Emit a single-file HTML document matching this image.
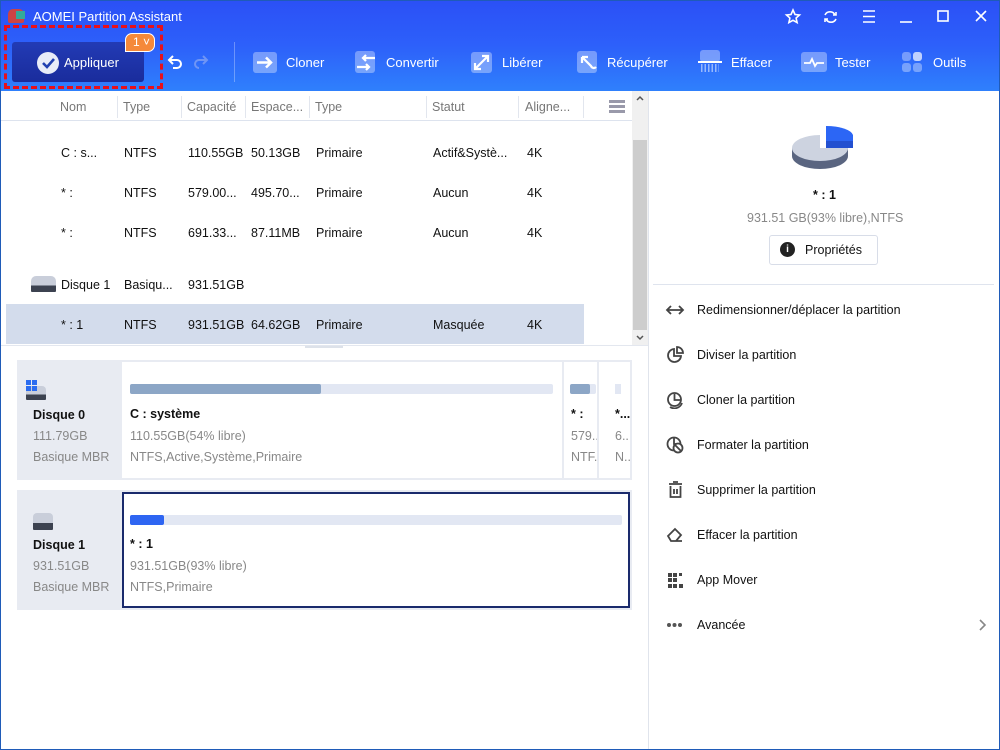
<!DOCTYPE html>
<html><head><meta charset="utf-8"><style>
*{margin:0;padding:0;box-sizing:border-box}
body{width:1000px;height:750px;overflow:hidden;font-family:"Liberation Sans","DejaVu Sans",sans-serif;font-size:12.5px;color:#111;background:#fff;position:relative}
.a{position:absolute;white-space:nowrap}
#hdr{position:absolute;left:0;top:0;width:1000px;height:91px;background:linear-gradient(180deg,#2b50f6 0%,#2d60fa 50%,#2f80fc 100%)}
.tb{color:#fff;font-size:13px}
.ic{position:absolute;border-radius:3px;background:rgba(255,255,255,.35)}
.hd{color:#777;font-size:12.5px}
.sep{position:absolute;top:96px;width:1px;height:22px;background:#e2e6ee}
.g{color:#888}
.menu{position:absolute;left:697px;font-size:12.5px;color:#111}
</style></head><body>
<div id="hdr"></div>
<div class="a" style="left:0;top:0;width:1000px;height:750px;border:1px solid #1f5bb8;z-index:9"></div>
<div class="a" style="left:8px;top:9px;width:16px;height:14px;background:#c44;border-radius:5px 5px 2px 2px"></div>
<div class="a" style="left:16px;top:11px;width:9px;height:8px;background:#3a9"></div>
<div class="a tb" style="left:33px;top:9px;font-size:13px">AOMEI Partition Assistant</div>
<svg class="a" style="left:780px;top:6px" width="210" height="22" fill="none" stroke="#fff" stroke-width="1.6">
<path d="M13 4l2 4.5 4.5.5-3.4 3 1 4.6L13 14.3 8.9 16.6l1-4.6-3.4-3 4.5-.5z"/>
<path d="M45 9a5.5 5.5 0 0 1 10 0M56 13a5.5 5.5 0 0 1-10 0"/><path d="M53 9h3V6M48 13h-3v3"/>
<path d="M83 5h12M83 10.5h12M83 16h12"/>
<path d="M120 16h12"/><rect x="158" y="5" width="10" height="10"/>
<path d="M196 5l10 10M206 5l-10 10"/></svg>
<div class="a" style="left:12px;top:42px;width:132px;height:40px;background:linear-gradient(#223bb5,#1a2c9c);border-radius:3px"></div>
<div class="a" style="left:37px;top:52px;width:22px;height:22px;border-radius:50%;background:#e8ecf8"></div>
<svg class="a" style="left:37px;top:52px" width="22" height="22"><path d="M6 11l4 4 7-8" stroke="#2040b0" stroke-width="2.6" fill="none"/></svg>
<div class="a tb" style="left:64px;top:55px;font-size:13px">Appliquer</div>
<div class="a" style="left:125px;top:33px;width:30px;height:19px;background:#f5893a;border:1.5px solid #fff;border-radius:7px 7px 7px 0;color:#fff;font-size:12px;padding-left:7px;line-height:16px">1 ˅</div>
<div class="a" style="left:4px;top:25px;width:159px;height:64px;border:3px dashed #e8101a"></div>
<svg class="a" style="left:166px;top:53px" width="45" height="16" fill="none" stroke-width="2"><path d="M4 7h7a4 4 0 0 1 0 8H7M7 3L3 7l4 4" stroke="#fff"/><path d="M40 7h-7a4 4 0 0 0 0 8M37 3l4 4-4 4" stroke="#6f95f5"/></svg>
<div class="a" style="left:234px;top:42px;width:1px;height:40px;background:rgba(255,255,255,.3)"></div>
<!-- toolbar icons -->
<div class="ic" style="left:253px;top:52px;width:24px;height:21px"></div>
<svg class="a" style="left:253px;top:52px" width="24" height="21" fill="none" stroke="#fff" stroke-width="2.5"><path d="M4 10.5h13M13 5.5l5 5-5 5"/></svg>
<div class="a tb" style="left:286px;top:55px">Cloner</div>
<div class="ic" style="left:355px;top:51px;width:20px;height:22px"></div>
<svg class="a" style="left:355px;top:51px" width="22" height="22" fill="none" stroke="#fff" stroke-width="2.2"><path d="M20 7H8M11 4L8 7l3 3M2 16h12M11 13l3 3-3 3"/></svg>
<div class="a tb" style="left:386px;top:55px">Convertir</div>
<div class="ic" style="left:471px;top:52px;width:21px;height:21px"></div>
<svg class="a" style="left:471px;top:52px" width="21" height="21" fill="none" stroke="#fff" stroke-width="2.2"><path d="M4 17L17 4M11 4h6v6M10 17H4v-6"/></svg>
<div class="a tb" style="left:502px;top:55px">Libérer</div>
<div class="ic" style="left:577px;top:51px;width:20px;height:22px"></div>
<svg class="a" style="left:577px;top:51px" width="22" height="24" fill="none" stroke="#fff" stroke-width="2.2"><path d="M5 6l9 9a3 3 0 0 0 5 1M5 6v6M5 6h6"/></svg>
<div class="a tb" style="left:607px;top:55px">Récupérer</div>
<div class="ic" style="left:700px;top:50px;width:20px;height:12px"></div>
<div class="a" style="left:698px;top:61px;width:24px;height:2px;background:#fff"></div>
<div class="a" style="left:701px;top:64px;width:18px;height:8px;background:repeating-linear-gradient(90deg,rgba(255,255,255,.5) 0 1.5px,transparent 1.5px 3.5px)"></div>
<div class="a tb" style="left:731px;top:55px">Effacer</div>
<div class="ic" style="left:801px;top:52px;width:26px;height:20px"></div>
<svg class="a" style="left:801px;top:52px" width="26" height="20" fill="none" stroke="#fff" stroke-width="1.8"><path d="M3 11h6l2-4 3 7 2-3h7"/></svg>
<div class="a tb" style="left:835px;top:55px">Tester</div>
<div class="ic" style="left:902px;top:52px;width:9px;height:9px"></div><div class="ic" style="left:913px;top:52px;width:9px;height:9px;background:rgba(255,255,255,.7)"></div><div class="ic" style="left:902px;top:63px;width:9px;height:9px"></div><div class="ic" style="left:913px;top:63px;width:9px;height:9px"></div>
<div class="a tb" style="left:933px;top:55px">Outils</div>
<!-- table header -->
<div class="a hd" style="left:60px;top:100px">Nom</div>
<div class="sep" style="left:117px"></div><div class="a hd" style="left:123px;top:100px">Type</div>
<div class="sep" style="left:181px"></div><div class="a hd" style="left:187px;top:100px">Capacité</div>
<div class="sep" style="left:245px"></div><div class="a hd" style="left:251px;top:100px">Espace...</div>
<div class="sep" style="left:309px"></div><div class="a hd" style="left:315px;top:100px">Type</div>
<div class="sep" style="left:426px"></div><div class="a hd" style="left:432px;top:100px">Statut</div>
<div class="sep" style="left:518px"></div><div class="a hd" style="left:525px;top:100px">Aligne...</div>
<div class="sep" style="left:583px"></div>
<div class="a" style="left:609px;top:100px;width:16px;height:3px;background:#99a"></div><div class="a" style="left:609px;top:105px;width:16px;height:3px;background:#99a"></div><div class="a" style="left:609px;top:110px;width:16px;height:3px;background:#99a"></div>
<div class="a" style="left:0;top:120px;width:632px;height:1px;background:#dde3ee"></div>
<div class="a" style="left:632px;top:91px;width:16px;height:254px;background:#f0f0f0"></div>
<div class="a" style="left:633px;top:140px;width:14px;height:190px;background:#cdcdcd"></div>
<svg class="a" style="left:632px;top:91px" width="16" height="254" fill="none" stroke="#555" stroke-width="1.5"><path d="M5 9l3-3 3 3M5 245l3 3 3-3"/></svg>
<!-- rows -->
<div class="a" style="left:6px;top:304px;width:578px;height:40px;background:#d3dcec"></div>
<div class="a" style="left:61px;top:146px">C : s...</div><div class="a" style="left:124px;top:146px">NTFS</div><div class="a" style="left:188px;top:146px">110.55GB</div><div class="a" style="left:251px;top:146px">50.13GB</div><div class="a" style="left:316px;top:146px">Primaire</div><div class="a" style="left:433px;top:146px">Actif&amp;Systè...</div><div class="a" style="left:527px;top:146px">4K</div>
<div class="a" style="left:61px;top:186px">* :</div><div class="a" style="left:124px;top:186px">NTFS</div><div class="a" style="left:188px;top:186px">579.00...</div><div class="a" style="left:251px;top:186px">495.70...</div><div class="a" style="left:316px;top:186px">Primaire</div><div class="a" style="left:433px;top:186px">Aucun</div><div class="a" style="left:527px;top:186px">4K</div>
<div class="a" style="left:61px;top:226px">* :</div><div class="a" style="left:124px;top:226px">NTFS</div><div class="a" style="left:188px;top:226px">691.33...</div><div class="a" style="left:251px;top:226px">87.11MB</div><div class="a" style="left:316px;top:226px">Primaire</div><div class="a" style="left:433px;top:226px">Aucun</div><div class="a" style="left:527px;top:226px">4K</div>
<div class="a" style="left:31px;top:276px;width:25px;height:16px;border-radius:5px 5px 1px 1px;background:linear-gradient(#c9ceda 60%,#3c4250 60%)"></div>
<div class="a" style="left:61px;top:278px">Disque 1</div><div class="a" style="left:124px;top:278px">Basiqu...</div><div class="a" style="left:188px;top:278px">931.51GB</div>
<div class="a" style="left:61px;top:318px">* : 1</div><div class="a" style="left:124px;top:318px">NTFS</div><div class="a" style="left:188px;top:318px">931.51GB</div><div class="a" style="left:251px;top:318px">64.62GB</div><div class="a" style="left:316px;top:318px">Primaire</div><div class="a" style="left:433px;top:318px">Masquée</div><div class="a" style="left:527px;top:318px">4K</div>
<div class="a" style="left:0;top:345px;width:648px;height:1px;background:#e3e7ef"></div>
<div class="a" style="left:305px;top:346px;width:38px;height:2px;background:#dde2ea"></div>
<!-- disk 0 card -->
<div class="a" style="left:17px;top:360px;width:615px;height:120px;background:#e8ebf2"></div>
<div class="a" style="left:122px;top:362px;width:440px;height:116px;background:#fff"></div>
<div class="a" style="left:564px;top:362px;width:33px;height:116px;background:#fff"></div>
<div class="a" style="left:599px;top:362px;width:31px;height:116px;background:#fff"></div>
<div class="a" style="left:26px;top:386px;width:20px;height:14px;border-radius:4px 4px 1px 1px;background:linear-gradient(#c9ceda 60%,#3c4250 60%)"></div>
<div class="a" style="left:26px;top:380px;width:5px;height:5px;background:#2b6cf0;box-shadow:6px 0 #2b6cf0,0 6px #2b6cf0,6px 6px #2b6cf0"></div>
<div class="a" style="left:33px;top:408px;font-weight:bold">Disque 0</div>
<div class="a g" style="left:33px;top:429px">111.79GB</div>
<div class="a g" style="left:33px;top:450px">Basique MBR</div>
<div class="a" style="left:130px;top:384px;width:423px;height:10px;background:#e2e7f3;border-radius:2px"></div>
<div class="a" style="left:130px;top:384px;width:191px;height:10px;background:#8ca6c6;border-radius:2px"></div>
<div class="a" style="left:130px;top:407px;font-weight:bold">C : système</div>
<div class="a g" style="left:130px;top:429px">110.55GB(54% libre)</div>
<div class="a g" style="left:130px;top:450px">NTFS,Active,Système,Primaire</div>
<div class="a" style="left:570px;top:384px;width:26px;height:10px;background:#e2e7f3;border-radius:2px"></div>
<div class="a" style="left:570px;top:384px;width:20px;height:10px;background:#8ca6c6;border-radius:2px"></div>
<div class="a" style="left:571px;top:407px;font-weight:bold">* :</div>
<div class="a" style="left:564px;top:420px;width:33px;height:50px;overflow:hidden"><div class="a g" style="left:7px;top:9px">579....</div><div class="a g" style="left:7px;top:30px">NTF...</div></div>
<div class="a" style="left:615px;top:384px;width:6px;height:10px;background:#e2e7f3"></div>
<div class="a" style="left:599px;top:400px;width:31px;height:70px;overflow:hidden"><div class="a" style="left:16px;top:7px;font-weight:bold">*...</div><div class="a g" style="left:16px;top:29px">6...</div><div class="a g" style="left:16px;top:50px">N...</div></div>
<!-- disk 1 card -->
<div class="a" style="left:17px;top:490px;width:615px;height:120px;background:#e8ebf2"></div>
<div class="a" style="left:122px;top:492px;width:508px;height:116px;background:#fff;border:2px solid #1a2a6c"></div>
<div class="a" style="left:33px;top:513px;width:20px;height:17px;border-radius:4px 4px 1px 1px;background:linear-gradient(#c9ceda 60%,#3c4250 60%)"></div>
<div class="a" style="left:33px;top:538px;font-weight:bold">Disque 1</div>
<div class="a g" style="left:33px;top:559px">931.51GB</div>
<div class="a g" style="left:33px;top:580px">Basique MBR</div>
<div class="a" style="left:130px;top:515px;width:492px;height:10px;background:#e2e7f3;border-radius:2px"></div>
<div class="a" style="left:130px;top:515px;width:34px;height:10px;background:#2e65f2;border-radius:2px"></div>
<div class="a" style="left:130px;top:537px;font-weight:bold">* : 1</div>
<div class="a g" style="left:130px;top:559px">931.51GB(93% libre)</div>
<div class="a g" style="left:130px;top:580px">NTFS,Primaire</div>
<!-- right panel -->
<div class="a" style="left:648px;top:91px;width:1px;height:659px;background:#e0e4ec"></div>
<svg class="a" style="left:790px;top:124px" width="66" height="50">
<path d="M2 24v8a28 13 0 0 0 56 0v-8z" fill="#5a6580"/>
<path d="M30 24V11A28 13 0 1 0 58 24z" fill="#cdd3e0"/>
<path d="M36 2v22h27V11A27 10 0 0 0 36 2z" fill="#2c66f5"/>
<rect x="36" y="17" width="27" height="7" fill="#2350d0"/>
</svg>
<div class="a" style="left:813px;top:188px;font-weight:bold">* : 1</div>
<div class="a g" style="left:747px;top:211px">931.51 GB(93% libre),NTFS</div>
<div class="a" style="left:769px;top:235px;width:109px;height:30px;border:1px solid #d8dde8;border-radius:3px"></div>
<div class="a" style="left:780px;top:242px;width:15px;height:15px;border-radius:50%;background:#222;color:#fff;font-size:10px;font-weight:bold;text-align:center;line-height:15px">i</div>
<div class="a" style="left:805px;top:243px">Propriétés</div>
<div class="a" style="left:653px;top:284px;width:341px;height:1px;background:#dfe4ee"></div>
<svg class="a" style="left:665px;top:303px" width="20" height="14" fill="none" stroke="#444" stroke-width="1.8"><path d="M2 7h16M6 3L2 7l4 4M14 3l4 4-4 4"/></svg><div class="menu" style="top:303px">Redimensionner/déplacer la partition</div>
<svg class="a" style="left:666px;top:346px" width="18" height="18" fill="none" stroke="#444" stroke-width="1.8"><path d="M8 3a6.5 6.5 0 1 0 7 7H8z"/><path d="M11 1v6h6a6 6 0 0 0-6-6z"/></svg><div class="menu" style="top:348px">Diviser la partition</div>
<svg class="a" style="left:666px;top:391px" width="18" height="18" fill="none" stroke="#444" stroke-width="1.8"><circle cx="8.5" cy="8.5" r="6.5"/><path d="M8.5 3v6h6M4 16a8 8 0 0 0 12-4"/></svg><div class="menu" style="top:393px">Cloner la partition</div>
<svg class="a" style="left:666px;top:436px" width="18" height="18" fill="none" stroke="#444" stroke-width="1.8"><circle cx="8" cy="8" r="6.5"/><path d="M8 2v6h6"/><circle cx="12" cy="12" r="4.5" fill="#fff"/><path d="M9 9l6 6"/></svg><div class="menu" style="top:438px">Formater la partition</div>
<svg class="a" style="left:667px;top:481px" width="18" height="18" fill="none" stroke="#444" stroke-width="1.8"><path d="M2 3h13M6 1h5M3.5 5v11h10V5M7 8v5M10 8v5"/></svg><div class="menu" style="top:483px">Supprimer la partition</div>
<svg class="a" style="left:666px;top:526px" width="18" height="18" fill="none" stroke="#444" stroke-width="1.8"><path d="M2 10l7-7 6 6-5 6H5zM5 15h11"/></svg><div class="menu" style="top:528px">Effacer la partition</div>
<svg class="a" style="left:667px;top:572px" width="18" height="18" fill="#444"><rect x="1" y="1" width="4" height="4"/><rect x="6" y="1" width="4" height="4"/><rect x="12" y="1" width="3" height="3"/><rect x="1" y="6" width="4" height="4"/><rect x="6" y="6" width="4" height="4"/><rect x="1" y="12" width="4" height="4"/><rect x="6" y="12" width="4" height="4"/><rect x="12" y="12" width="4" height="4"/></svg><div class="menu" style="top:573px">App Mover</div>
<svg class="a" style="left:666px;top:621px" width="18" height="8" fill="#555"><circle cx="3" cy="4" r="2"/><circle cx="8.5" cy="4" r="2"/><circle cx="14" cy="4" r="2"/></svg><div class="menu" style="top:618px">Avancée</div>
<svg class="a" style="left:977px;top:618px" width="10" height="14" fill="none" stroke="#888" stroke-width="1.6"><path d="M3 2l5 5-5 5"/></svg>
</body></html>
